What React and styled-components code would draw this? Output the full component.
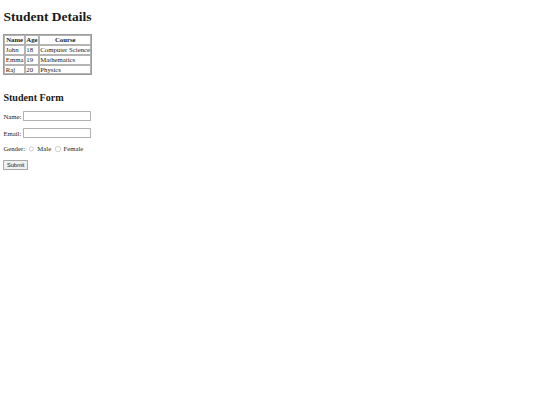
import React from "react";
import styled, { createGlobalStyle } from "styled-components";

const GlobalStyle = createGlobalStyle`
  html, body {
    margin: 0;
    padding: 0;
    background: #ffffff;
  }
`;

const Page = styled.div`
  zoom: 0.421875;
  width: 1280px;
  padding: 0 8px;
  box-sizing: border-box;
  font-family: "Liberation Serif", "Times New Roman", serif;
  font-size: 16px;
  color: #1a1a1a;
`;

const Heading = styled.h1`
  font-size: 32px;
  font-weight: bold;
  margin: 21.44px 0;
`;

const SubHeading = styled.h2`
  font-size: 24px;
  font-weight: bold;
  margin: 21px 0 19.92px;
`;

const Table = styled.table`
  border: 1px solid #9a9a9a;
  border-spacing: 2px;
`;

const HeadCell = styled.th`
  border: 1px solid #b4b4b4;
  padding: 1px;
  font-weight: bold;
`;

const Cell = styled.td`
  border: 1px solid #b4b4b4;
  padding: 1px;
`;

const Spacer = styled.div`
  height: 18px;
`;

const Field = styled.p`
  margin: ${({ $top }) => $top || 16}px 0 16px;
  display: flex;
  align-items: center;
  gap: 4px;
`;

const TextInput = styled.input`
  width: 153px;
  height: 17px;
  padding: 1px 2px;
  border: 1px solid #b0b0b0;
  border-radius: 2px;
  font-size: 13.33px;
  background: #fff;
`;

const Radio = styled.input`
  margin: 3px 3px 0 5px;
  opacity: 0.8;
`;

const Button = styled.button`
  font-family: "Liberation Sans", Arial, sans-serif;
  font-size: 13.33px;
  padding: 2px 6px;
  border: 1px solid #a8a8a8;
  border-radius: 2px;
  background: #f0f0f0;
  color: #1a1a1a;
`;

const students = [
  { name: "John", age: 18, course: "Computer Science" },
  { name: "Emma", age: 19, course: "Mathematics" },
  { name: "Raj", age: 20, course: "Physics" },
];

export default function App() {
  return (
    <Page>
      <GlobalStyle />
      <Heading>Student Details</Heading>
      <Table>
        <thead>
          <tr>
            <HeadCell>Name</HeadCell>
            <HeadCell>Age</HeadCell>
            <HeadCell>Course</HeadCell>
          </tr>
        </thead>
        <tbody>
          {students.map((s) => (
            <tr key={s.name}>
              <Cell>{s.name}</Cell>
              <Cell>{s.age}</Cell>
              <Cell>{s.course}</Cell>
            </tr>
          ))}
        </tbody>
      </Table>
      <Spacer />
      <SubHeading>Student Form</SubHeading>
      <form onSubmit={(e) => e.preventDefault()}>
        <Field>
          Name: <TextInput type="text" />
        </Field>
        <Field>
          Email: <TextInput type="email" />
        </Field>
        <Field>
          Gender:
          <Radio type="radio" name="gender" /> Male
          <Radio type="radio" name="gender" /> Female
        </Field>
        <Field $top={20}>
          <Button type="submit">Submit</Button>
        </Field>
      </form>
    </Page>
  );
}
